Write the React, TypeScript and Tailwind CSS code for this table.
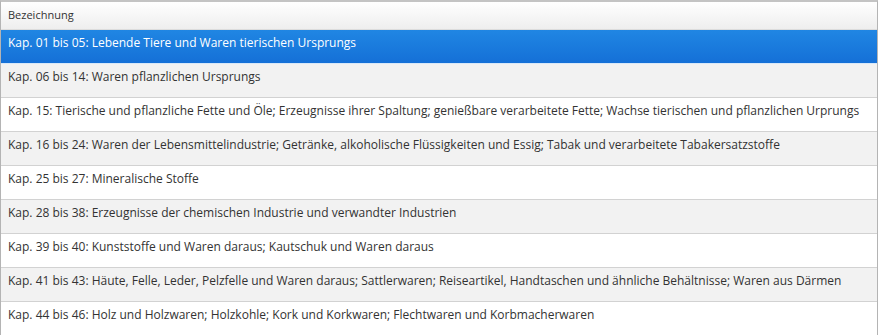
import React from "react"

const chapters = [
  "Kap. 01 bis 05: Lebende Tiere und Waren tierischen Ursprungs",
  "Kap. 06 bis 14: Waren pflanzlichen Ursprungs",
  "Kap. 15: Tierische und pflanzliche Fette und Öle; Erzeugnisse ihrer Spaltung; genießbare verarbeitete Fette; Wachse tierischen und pflanzlichen Urprungs",
  "Kap. 16 bis 24: Waren der Lebensmittelindustrie; Getränke, alkoholische Flüssigkeiten und Essig; Tabak und verarbeitete Tabakersatzstoffe",
  "Kap. 25 bis 27: Mineralische Stoffe",
  "Kap. 28 bis 38: Erzeugnisse der chemischen Industrie und verwandter Industrien",
  "Kap. 39 bis 40: Kunststoffe und Waren daraus; Kautschuk und Waren daraus",
  "Kap. 41 bis 43: Häute, Felle, Leder, Pelzfelle und Waren daraus; Sattlerwaren; Reiseartikel, Handtaschen und ähnliche Behältnisse; Waren aus Därmen",
  "Kap. 44 bis 46: Holz und Holzwaren; Holzkohle; Kork und Korkwaren; Flechtwaren und Korbmacherwaren",
]

export default function App() {
  const selected = 0
  return (
    <div className="h-[335px] w-[879px] overflow-hidden bg-white font-['Open_Sans',sans-serif]">
      <div className="flex h-full w-[878px] flex-col border-x border-t-2 border-b border-x-[#b4b4b4] border-t-[#c4c4c4] border-b-[#b4b4b4]">
        <div className="flex h-[28px] shrink-0 items-center border-b border-[#dcdcdc] bg-gradient-to-b from-white to-[#eeeeee] pl-[7px] text-[11px] text-[#333]">
          Bezeichnung
        </div>
        {chapters.map((label, i) => {
          const isSel = i === selected
          return (
            <div
              key={label}
              className={
                isSel
                  ? "h-[34px] shrink-0 border-b border-[#d8e8f8] bg-gradient-to-b from-[#2086e3] to-[#1570d7] pl-[7px] pt-[4px] text-[12px] whitespace-nowrap text-white"
                  : i % 2 === 1
                  ? "h-[34px] shrink-0 border-b border-[#d2d2d2] bg-[#f2f2f2] pl-[7px] pt-[4px] text-[12px] whitespace-nowrap text-[#333]"
                  : "h-[34px] shrink-0 border-b border-[#d2d2d2] bg-white pl-[7px] pt-[4px] text-[12px] whitespace-nowrap text-[#333]"
              }
            >
              {label}
            </div>
          )
        })}
      </div>
    </div>
  )
}
